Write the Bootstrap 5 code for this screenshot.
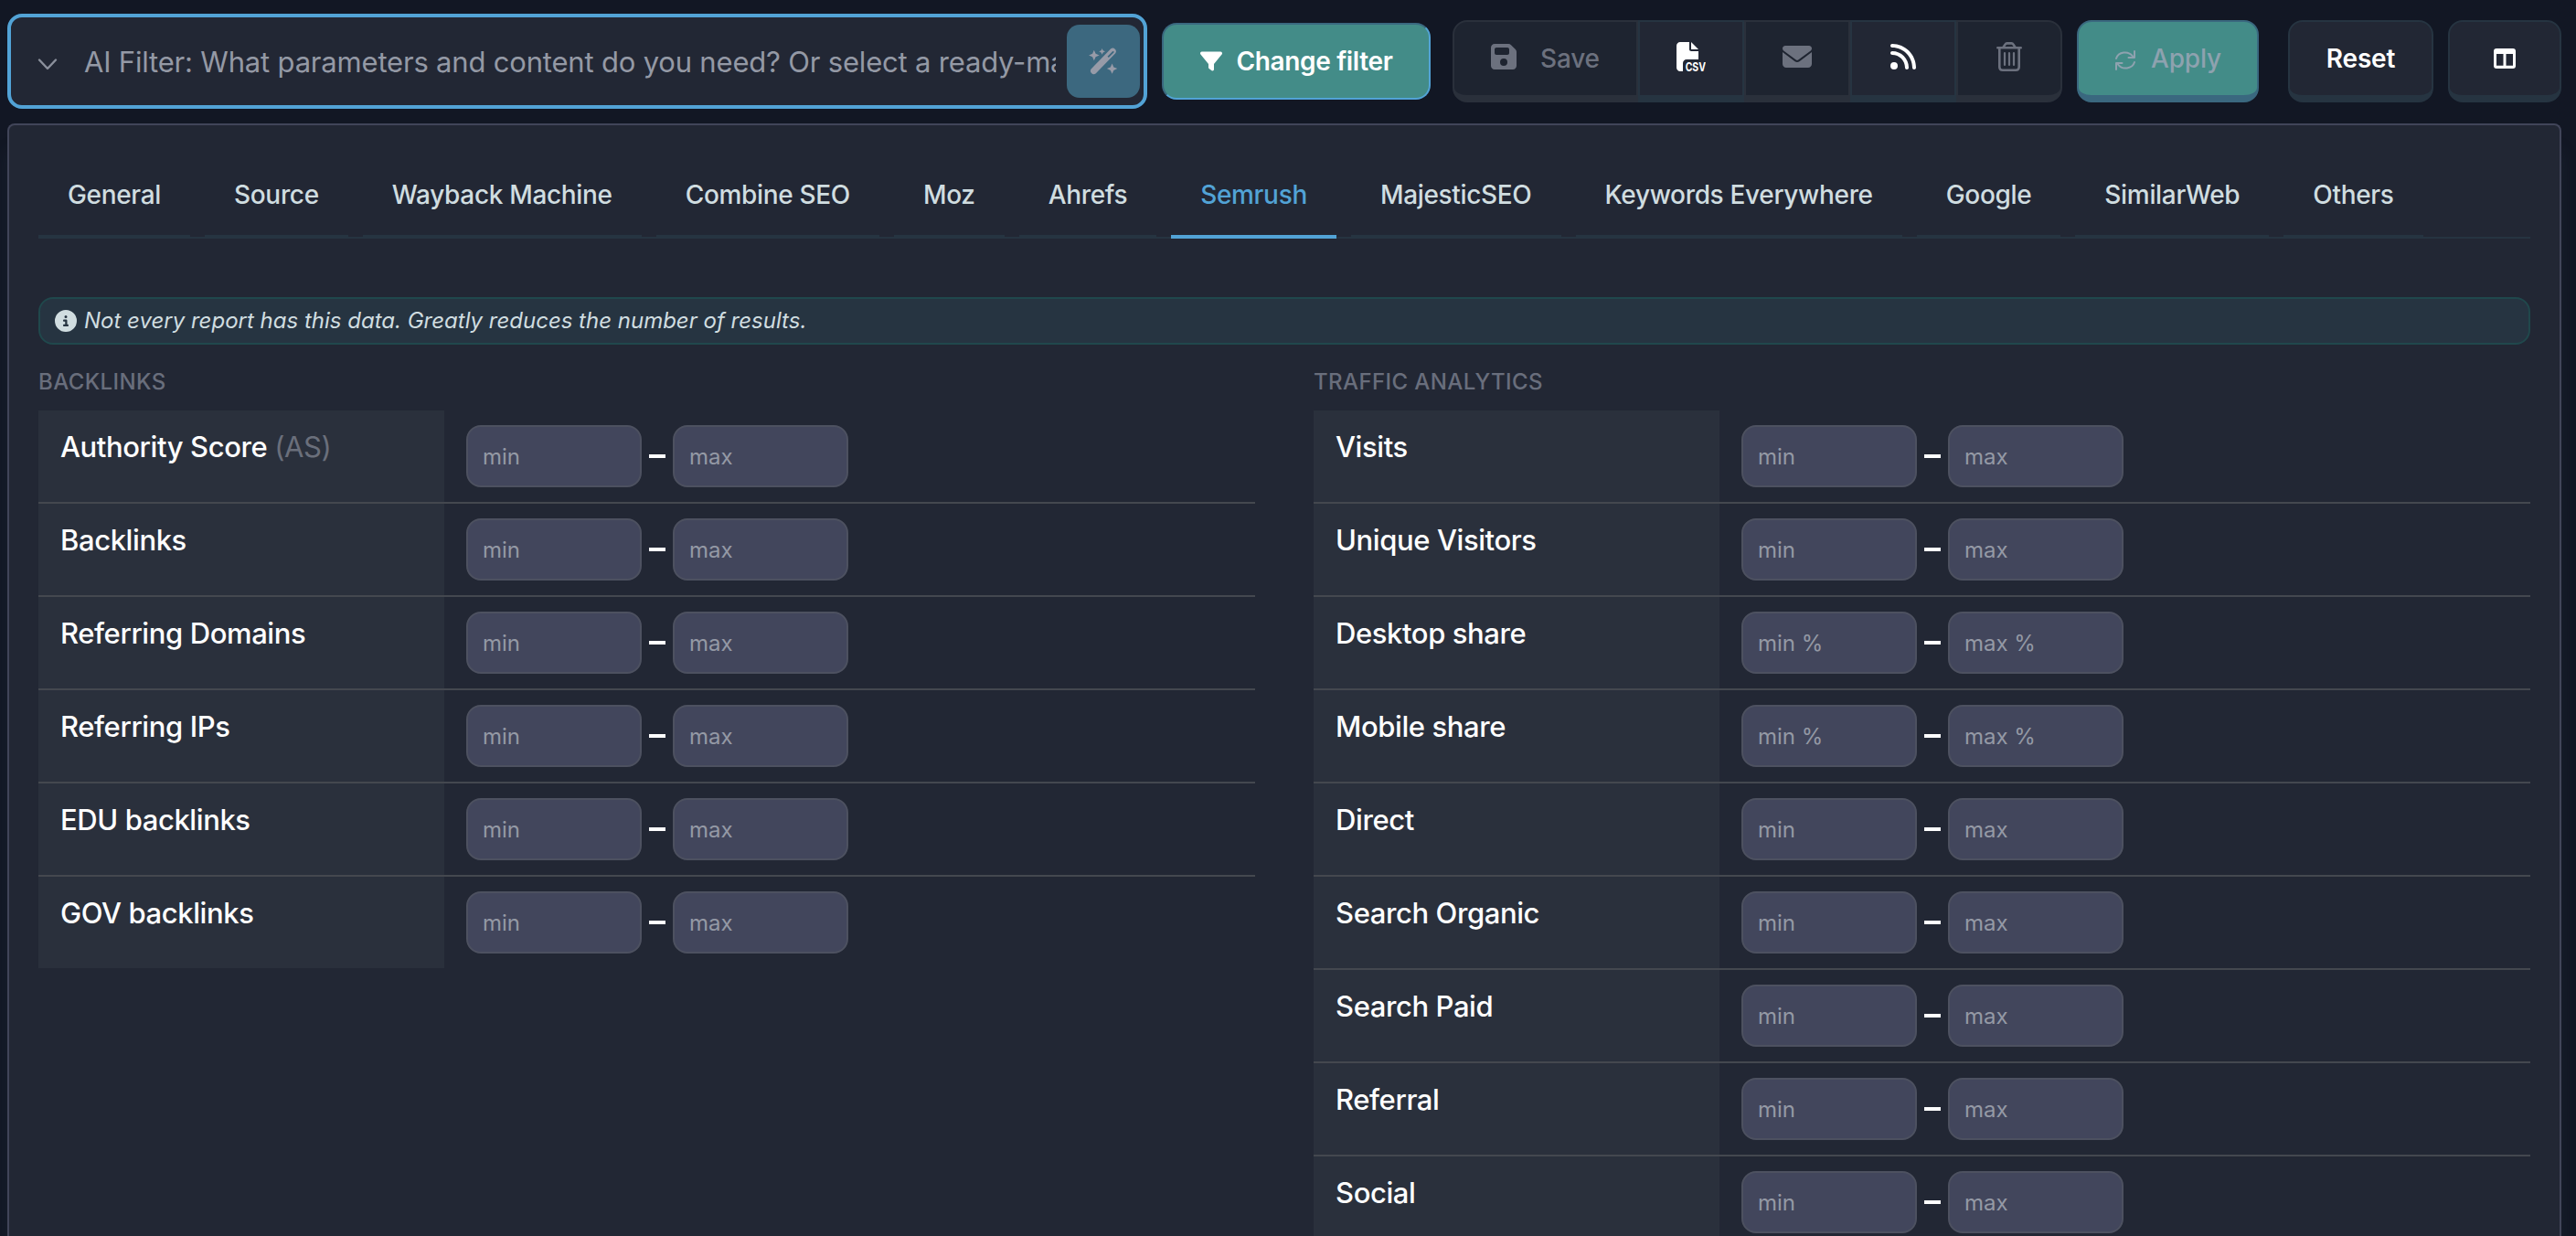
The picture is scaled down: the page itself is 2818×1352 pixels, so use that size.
<!DOCTYPE html>
<html lang="en" data-bs-theme="dark">
<head>
<meta charset="utf-8">
<title>Domain filter</title>
<link rel="stylesheet" href="https://cdn.jsdelivr.net/npm/bootstrap@5.3.0/dist/css/bootstrap.min.css">
<style>
body{background:#121724;color:#fff;font-family:Inter,"Liberation Sans",sans-serif;font-size:28px;overflow:hidden;height:1352px}
.toolbar{padding:15px 16px 0 8px;height:119px}
svg{display:block;flex:none}
.ai-box{width:1247px;height:104px;border:4px solid #52a3d6;border-radius:16px;background:#222734;padding:0 4px 0 28px}
.ai-box .form-control{font-size:31px;letter-spacing:-.19px;color:#fff;padding:0 0 0 28px;height:80px;margin-right:12px;min-width:0;background:none;box-shadow:none}
.form-control::placeholder{color:#9499a5;opacity:1}
.wand{width:80px;height:80px;background:#3c687f;border:0;border-radius:14px;color:#979ba8;padding:0}
.btn{font-family:inherit;font-size:28px;line-height:1;letter-spacing:-.2px;padding:0;opacity:1}
.btn-change{width:294px;height:84px;border:2px solid #3a687f;border-right-color:#52a3d6;border-bottom-color:#52a3d6;border-radius:16px;background:#438c88;color:#fff;font-weight:600;letter-spacing:-.35px;margin:0 24px 0 16px;gap:16px}
.btn-tool{height:90px;width:116px;border:2px solid #263441;border-bottom-width:8px;background:#222734;color:#fff;border-radius:16px;font-weight:600}
.btn-tool:disabled{background:#1e2430;border-color:#2a303b;color:#6c717e;opacity:1;font-weight:500}
.tool-group{margin-right:16px}
.toolbar .tool-group>.btn.btn-tool{margin-left:0!important}
.btn-save{width:203px;gap:26px}
.btn-tool.btn-apply:disabled{width:199px;gap:16px;background:#438c88;border-color:#3a687f;color:#8ea2af;margin-right:32px}
.btn-reset{width:159px}
.btn-cols{width:124px;margin-left:16px}
.panel{margin:16px 16px 0 8px;height:1217px;overflow:hidden;border:2px solid #414559;border-bottom:0;border-radius:8px 8px 0 0;background:#222734;padding:0 32px;box-shadow:0 30px 16px rgba(38,52,65,.35)}
.tabs{height:124px;padding-top:26px;gap:16px;background:linear-gradient(#263441,#263441) left bottom/100% 2px no-repeat}
.tabs .nav-link{padding:0 32px;line-height:101px;border-radius:0;border:0;border-bottom:4px solid #263441;height:98px;color:#d0dde0;font-weight:500;letter-spacing:-.33px;white-space:nowrap}
.tabs .nav-link.active{background:none;color:#52a3d6;border-color:#52a3d6}
.notice{height:52px;margin:64px 0 0;padding:0 0 0 16px;border:2px solid #20484c;border-radius:16px;background:#263441;color:#d0dde0;font-size:24px;font-style:italic;font-weight:400;gap:8px}
.sets{gap:64px}
.sets>section{flex:1 1 0}
.set-title{font-size:24px;font-weight:500;letter-spacing:.4px;line-height:32px;color:#696e7c;margin:25px 0 15px}
.metric{height:102px;border-bottom:2px solid #44484f}
.metric:last-child{border-bottom:0;height:100px}
.metric-name{width:444px;background:#2a303c;padding:16px 0 0 24px;font-size:31px;line-height:48px;font-weight:500;letter-spacing:-.4px;margin-right:24px}
.metric-name i{font-style:normal;font-weight:400;color:#6a6f7b}
.metric .form-control{width:192px;height:68px;border:2px solid #4d5160;border-radius:16px;background:#42465c;font-size:24px;padding:0 16px;color:#fff;margin-top:16px}
.dash{width:34px;height:4px;margin-top:48px;padding:0 8px}
.dash::before{content:"";display:block;height:4px;background:#fff}
</style>
<script src="https://cdn.jsdelivr.net/npm/bootstrap@5.3.0/dist/js/bootstrap.bundle.min.js"></script>
</head>
<body>
<header class="toolbar d-flex align-items-center">
  <div class="ai-box d-flex align-items-center">
    <svg width="24" height="16" viewBox="0 0 24 16" fill="none" stroke="#8b909c" stroke-width="2.4" stroke-linecap="round" stroke-linejoin="round" class="mt-2"><path d="M3 2.500l9 9.500 9-9.500"/></svg>
    <input class="form-control border-0 flex-grow-1" type="text" placeholder="AI Filter: What parameters and content do you need? Or select a ready-made filter">
    <button class="btn wand d-flex align-items-center justify-content-center flex-shrink-0" type="button">
      <svg width="32" height="32" viewBox="0 0 32 32" fill="currentColor"><path fill-rule="evenodd" d="M24.2 2.3a3.6 3.6 0 0 1 5 5L7.6 29.4a3.6 3.6 0 0 1-5-5zM26 5.2l-5.500 5.500 1.400 1.400 5.500-5.500c.9-1-.4-2.300-1.400-1.400z"/><path d="M5.800 3.800l1.800 4 4 1.700-4 1.800-1.800 4-1.700-4-4-1.800 4-1.700zM14.600 2l1 2.300 2.400 1-2.400 1.100-1 2.300-1-2.300-2.400-1.100 2.400-1zM25.600 18.500l1.700 3.900 4 1.700-4 1.800-1.700 3.900-1.800-3.900-3.900-1.800 3.900-1.700z"/></svg>
    </button>
  </div>
  <button class="btn btn-change d-flex align-items-center justify-content-center" type="button">
    <svg width="24" height="24" viewBox="0 0 512 512" fill="currentColor"><path d="M3.900 54.900C10.500 40.900 24.500 32 40 32H472c15.500 0 29.500 8.900 36.100 22.900s4.600 30.500-5.200 42.500L320 320.900V448c0 12.100-6.800 23.200-17.700 28.600s-23.800 4.300-33.500-3l-64-48c-8.100-6-12.800-15.500-12.800-25.600V320.900L9 97.300C-.7 85.400-2.800 68.800 3.900 54.900z"/></svg>
    Change filter
  </button>
  <div class="btn-group tool-group">
    <button class="btn btn-tool btn-save d-flex align-items-center justify-content-center flex-grow-0" type="button" disabled>
      <svg width="28" height="32" viewBox="0 0 448 512" fill="currentColor" class="mb-1"><path d="M64 32C28.700 32 0 60.700 0 96V416c0 35.300 28.700 64 64 64H384c35.300 0 64-28.700 64-64V173.300c0-17-6.700-33.300-18.700-45.300L352 50.700C340 38.700 323.700 32 306.700 32H64zm0 96c0-17.700 14.300-32 32-32H288c17.700 0 32 14.300 32 32v64c0 17.700-14.300 32-32 32H96c-17.700 0-32-14.300-32-32V128zM224 288a64 64 0 1 1 0 128 64 64 0 1 1 0-128z"/></svg>
      Save
    </button>
    <button class="btn btn-tool d-flex align-items-center justify-content-center flex-grow-0" type="button">
      <svg width="32" height="32" viewBox="0 0 512 512" fill="currentColor" class="mb-1"><path d="M0 64C0 28.700 28.700 0 64 0H224V128c0 17.700 14.300 32 32 32H384V304H176c-35.300 0-64 28.700-64 64V512H64c-35.300 0-64-28.700-64-64V64zm384 64H256V0L384 128z"/><text x="154" y="510" font-size="212" font-weight="700" textLength="358" lengthAdjust="spacingAndGlyphs">CSV</text></svg>
    </button>
    <button class="btn btn-tool d-flex align-items-center justify-content-center flex-grow-0" type="button" disabled>
      <svg width="32" height="32" viewBox="0 0 512 512" fill="currentColor" class="mb-1"><path d="M48 64C21.500 64 0 85.500 0 112c0 15.100 7.100 29.300 19.200 38.400L236.800 313.600c11.400 8.500 27 8.500 38.400 0L492.800 150.400c12.100-9.100 19.200-23.300 19.200-38.400c0-26.500-21.500-48-48-48H48zM0 176V384c0 35.300 28.700 64 64 64H448c35.300 0 64-28.700 64-64V176L294.400 339.200c-22.800 17.100-54 17.100-76.800 0L0 176z"/></svg>
    </button>
    <button class="btn btn-tool d-flex align-items-center justify-content-center flex-grow-0" type="button">
      <svg width="28" height="32" viewBox="0 0 448 512" fill="currentColor" class="mb-1"><path d="M0 64C0 46.300 14.300 32 32 32c229.800 0 416 186.200 416 416c0 17.700-14.300 32-32 32s-32-14.300-32-32C384 253.600 226.400 96 32 96C14.300 96 0 81.700 0 64zM0 416a64 64 0 1 1 128 0A64 64 0 1 1 0 416zM32 160c159.100 0 288 128.900 288 288c0 17.700-14.300 32-32 32s-32-14.300-32-32c0-123.700-100.300-224-224-224c-17.700 0-32-14.300-32-32s14.300-32 32-32z"/></svg>
    </button>
    <button class="btn btn-tool d-flex align-items-center justify-content-center flex-grow-0" type="button" disabled>
      <svg width="28" height="32" viewBox="0 0 28 32" fill="none" stroke="currentColor" stroke-width="2.600" stroke-linecap="round" stroke-linejoin="round" class="mb-1"><path d="M1.300 6.300h25.400M7.300 6l2.200-3.400c.5-.8 1-1.200 2-1.200h5c1 0 1.500.4 2 1.200L20.700 6M3.300 6.500v20.700c0 2 1.400 3.500 3.500 3.500h14.400c2.100 0 3.500-1.500 3.500-3.500V6.500"/><path stroke-width="2.200" d="M9 12v13M14 12v13M19 12v13"/></svg>
    </button>
  </div>
  <button class="btn btn-tool btn-apply d-flex align-items-center justify-content-center" type="button" disabled>
    <svg width="24" height="24" viewBox="0 0 24 24" fill="none" stroke="currentColor" stroke-width="2" stroke-linecap="round" stroke-linejoin="round" class="mt-1"><path d="M2 10a10 9 0 0 1 18-2.500M22 2v7h-6.500M22 14a10 9 0 0 1-18 2.500M2 22v-7h6.500"/></svg>
    Apply
  </button>
  <button class="btn btn-tool btn-reset" type="button">Reset</button>
  <button class="btn btn-tool btn-cols d-flex align-items-center justify-content-center" type="button">
    <svg width="24" height="22" viewBox="0 0 24 22" fill="currentColor"><path fill-rule="evenodd" d="M3 0h18a3 3 0 0 1 3 3v16a3 3 0 0 1-3 3H3a3 3 0 0 1-3-3V3a3 3 0 0 1 3-3zM3 6v12.800h7.500V6zM13.500 6v12.800H21V6z"/></svg>
  </button>
</header>

<main class="panel">
  <nav class="nav tabs flex-nowrap">
    <a class="nav-link">General</a>
    <a class="nav-link">Source</a>
    <a class="nav-link">Wayback Machine</a>
    <a class="nav-link">Combine SEO</a>
    <a class="nav-link">Moz</a>
    <a class="nav-link">Ahrefs</a>
    <a class="nav-link active">Semrush</a>
    <a class="nav-link">MajesticSEO</a>
    <a class="nav-link">Keywords Everywhere</a>
    <a class="nav-link">Google</a>
    <a class="nav-link">SimilarWeb</a>
    <a class="nav-link">Others</a>
  </nav>
  <div class="notice d-flex align-items-center">
    <svg width="24" height="24" viewBox="0 0 512 512" fill="currentColor"><path d="M256 512A256 256 0 1 0 256 0a256 256 0 1 0 0 512zM216 336h24V272H216c-13.300 0-24-10.700-24-24s10.700-24 24-24h48c13.300 0 24 10.700 24 24v88h8c13.300 0 24 10.700 24 24s-10.700 24-24 24H216c-13.300 0-24-10.700-24-24s10.700-24 24-24zm40-208a32 32 0 1 1 0 64 32 32 0 1 1 0-64z"/></svg>
    <span>Not every report has this data. Greatly reduces the number of results.</span>
  </div>
  <div class="sets d-flex">
    <section>
      <h2 class="set-title">BACKLINKS</h2>
      <div>
        <div class="metric d-flex"><div class="metric-name">Authority Score <i>(AS)</i></div><input class="form-control" placeholder="min"><span class="dash"></span><input class="form-control" placeholder="max"></div>
        <div class="metric d-flex"><div class="metric-name">Backlinks</div><input class="form-control" placeholder="min"><span class="dash"></span><input class="form-control" placeholder="max"></div>
        <div class="metric d-flex"><div class="metric-name">Referring Domains</div><input class="form-control" placeholder="min"><span class="dash"></span><input class="form-control" placeholder="max"></div>
        <div class="metric d-flex"><div class="metric-name">Referring IPs</div><input class="form-control" placeholder="min"><span class="dash"></span><input class="form-control" placeholder="max"></div>
        <div class="metric d-flex"><div class="metric-name">EDU backlinks</div><input class="form-control" placeholder="min"><span class="dash"></span><input class="form-control" placeholder="max"></div>
        <div class="metric d-flex"><div class="metric-name">GOV backlinks</div><input class="form-control" placeholder="min"><span class="dash"></span><input class="form-control" placeholder="max"></div>
      </div>
    </section>
    <section>
      <h2 class="set-title">TRAFFIC ANALYTICS</h2>
      <div>
        <div class="metric d-flex"><div class="metric-name">Visits</div><input class="form-control" placeholder="min"><span class="dash"></span><input class="form-control" placeholder="max"></div>
        <div class="metric d-flex"><div class="metric-name">Unique Visitors</div><input class="form-control" placeholder="min"><span class="dash"></span><input class="form-control" placeholder="max"></div>
        <div class="metric d-flex"><div class="metric-name">Desktop share</div><input class="form-control" placeholder="min %"><span class="dash"></span><input class="form-control" placeholder="max %"></div>
        <div class="metric d-flex"><div class="metric-name">Mobile share</div><input class="form-control" placeholder="min %"><span class="dash"></span><input class="form-control" placeholder="max %"></div>
        <div class="metric d-flex"><div class="metric-name">Direct</div><input class="form-control" placeholder="min"><span class="dash"></span><input class="form-control" placeholder="max"></div>
        <div class="metric d-flex"><div class="metric-name">Search Organic</div><input class="form-control" placeholder="min"><span class="dash"></span><input class="form-control" placeholder="max"></div>
        <div class="metric d-flex"><div class="metric-name">Search Paid</div><input class="form-control" placeholder="min"><span class="dash"></span><input class="form-control" placeholder="max"></div>
        <div class="metric d-flex"><div class="metric-name">Referral</div><input class="form-control" placeholder="min"><span class="dash"></span><input class="form-control" placeholder="max"></div>
        <div class="metric d-flex"><div class="metric-name">Social</div><input class="form-control" placeholder="min"><span class="dash"></span><input class="form-control" placeholder="max"></div>
      </div>
    </section>
  </div>
</main>
</body>
</html>
